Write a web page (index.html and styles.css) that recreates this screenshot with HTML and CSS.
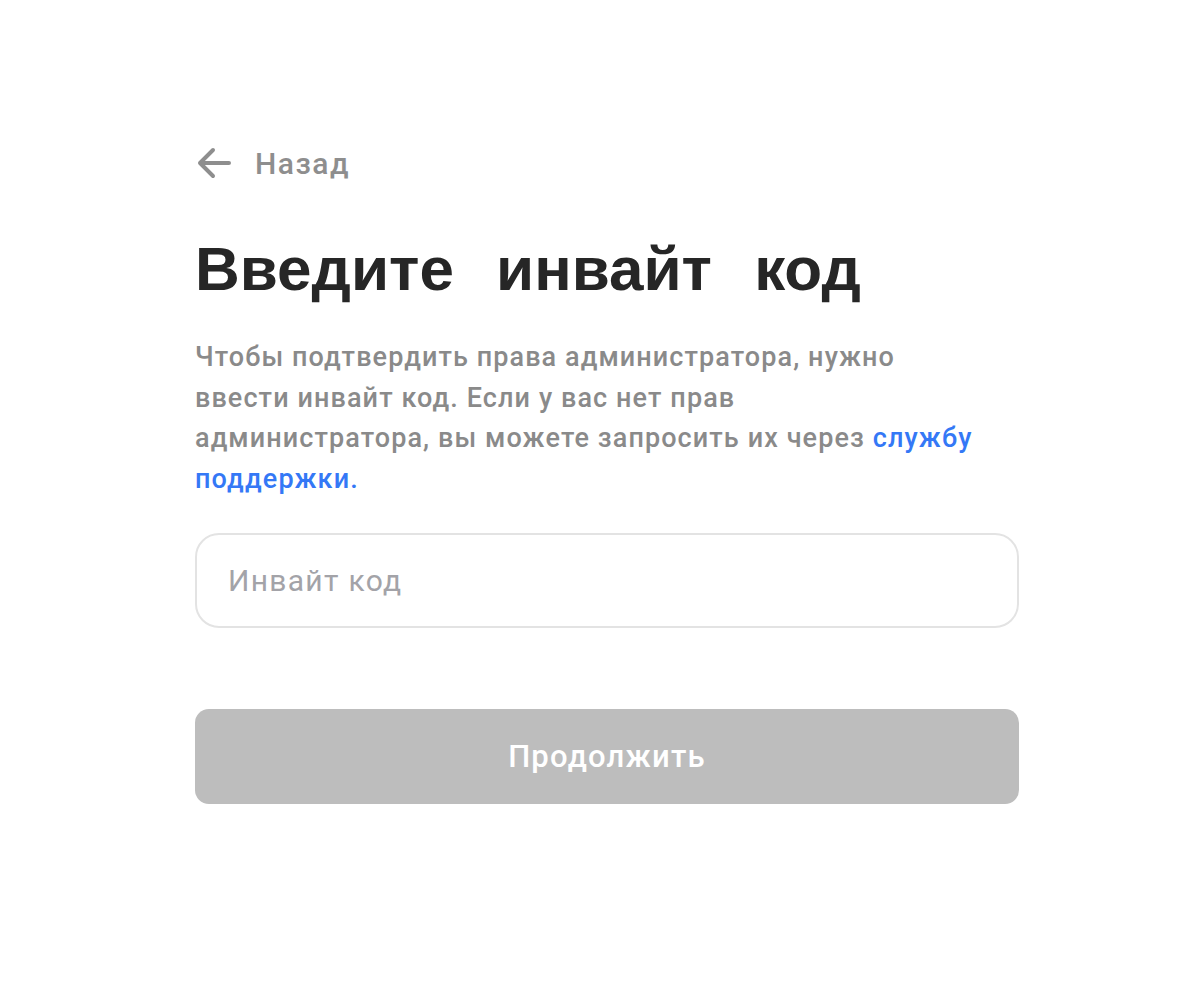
FILE: index.html
```html
<!doctype html>
<html lang="ru">
    <head>
        <meta charset="UTF-8" />
        <meta name="viewport" content="width=device-width, initial-scale=1.0" />
        <title>Инвайт код</title>
        <link rel="stylesheet" href="styles.css">
    </head>
    <body>
        <div class="container">
            <a class="back" href="#">
                <svg class="back-icon" width="36" height="36" viewBox="0 0 36 36" fill="none">
                    <path d="M34 18H5M18 5L5 18l13 13" stroke="#8e8e8e" stroke-width="4" stroke-linecap="round" stroke-linejoin="round" />
                </svg>
                <span>Назад</span>
            </a>

            <h1>Введите инвайт код</h1>

            <p class="lead">
                Чтобы подтвердить права администратора, нужно<br />
                ввести инвайт код. Если у вас нет прав<br />
                администратора, вы можете запросить их через
                <a href="#">службу<br />поддержки.</a>
            </p>

            <input class="field" type="text" placeholder="Инвайт код" />

            <button class="submit" disabled>Продолжить</button>
        </div>
    </body>
</html>
```

FILE: styles.css
```css
body {
    background-color: #ffffff;
    font-family: Roboto, "Liberation Sans", Arial, sans-serif;
    margin: 0;
}

.container {
    width: 824px;
    padding: 142px 0 0 195px;
    display: flex;
    flex-direction: column;
}

.back {
    display: flex;
    align-items: center;
    gap: 24px;
    color: #8e8e8e;
    text-decoration: none;
    font-size: 30px;
    font-weight: 500;
    letter-spacing: 1.5px;
    height: 42px;
}

.back-icon {
    display: block;
}

h1 {
    font-family: "Liberation Sans", Arial, sans-serif;
    font-size: 62px;
    font-weight: 700;
    word-spacing: 25px;
    color: #262626;
    margin: 45px 0 0;
    line-height: 80px;
}

.lead {
    font-size: 27px;
    font-weight: 500;
    letter-spacing: 1.1px;
    color: #8a8a8a;
    line-height: 40.5px;
    margin: 28px 0 0;
}

.lead a {
    color: #3478f6;
    text-decoration: none;
}

.field {
    box-sizing: border-box;
    height: 95px;
    margin-top: 34px;
    border: 2px solid #e3e3e3;
    border-radius: 24px;
    padding: 0 31px;
    font-family: inherit;
    font-size: 30px;
    letter-spacing: 1.3px;
    color: #262626;
    outline: none;
}

.field::placeholder {
    color: #a3a3a8;
}

.submit {
    height: 95px;
    margin-top: 81px;
    border: none;
    border-radius: 14px;
    background-color: #bdbdbd;
    color: #ffffff;
    font-family: inherit;
    font-size: 31px;
    font-weight: 500;
    letter-spacing: 1.2px;
}
```
